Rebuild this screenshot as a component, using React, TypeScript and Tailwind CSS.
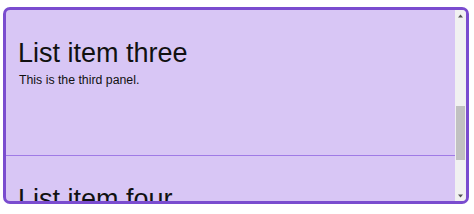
import React, { useEffect, useRef } from "react";

const panels = [
  { title: "List item one", text: "This is the first panel." },
  { title: "List item two", text: "This is the second panel." },
  { title: "List item three", text: "This is the third panel." },
  { title: "List item four", text: "This is the fourth panel." },
];

export default function App() {
  const ref = useRef<HTMLDivElement>(null);
  useEffect(() => {
    if (ref.current) ref.current.scrollTop = 292;
  }, []);
  return (
    <div className="w-[474px] h-[214px] bg-white overflow-hidden pt-[7px] pl-[3px]" style={{ fontFamily: '"Liberation Sans", Arial, sans-serif' }}>
      <div className="flex w-[466px] h-[197px] border-[3px] border-[#7a4ccf] rounded-[7px] bg-[#d8c6f5] overflow-hidden">
        <div ref={ref} className="flex-1 h-full overflow-hidden">
          {panels.map((p, i) => (
            <div
              key={i}
              className={`h-[146px] px-[13px] pt-[28px] ${i < panels.length - 1 ? "border-b border-[#a07ae6]" : ""}`}
            >
              <div className="text-[27px] leading-[31px] text-[#111] -ml-px">{p.title}</div>
              <div className="mt-[4px] text-[12.3px] leading-[14px] text-[#111]">{p.text}</div>
            </div>
          ))}
        </div>
        <div className="w-[11px] h-full bg-[#f1f1f1] flex flex-col">
          <div className="h-[11px] flex items-center justify-center">
            <svg width="5" height="4" viewBox="0 0 5 4">
              <polygon points="2.5,0.5 5,3.5 0,3.5" fill="#505050" />
            </svg>
          </div>
          <div className="flex-1 px-[1px]">
            <div className="mt-[85px] h-[54px] bg-[#c1c1c1]" />
          </div>
          <div className="h-[11px] flex items-center justify-center">
            <svg width="5" height="4" viewBox="0 0 5 4">
              <polygon points="0,0.5 5,0.5 2.5,3.5" fill="#505050" />
            </svg>
          </div>
        </div>
      </div>
    </div>
  );
}
